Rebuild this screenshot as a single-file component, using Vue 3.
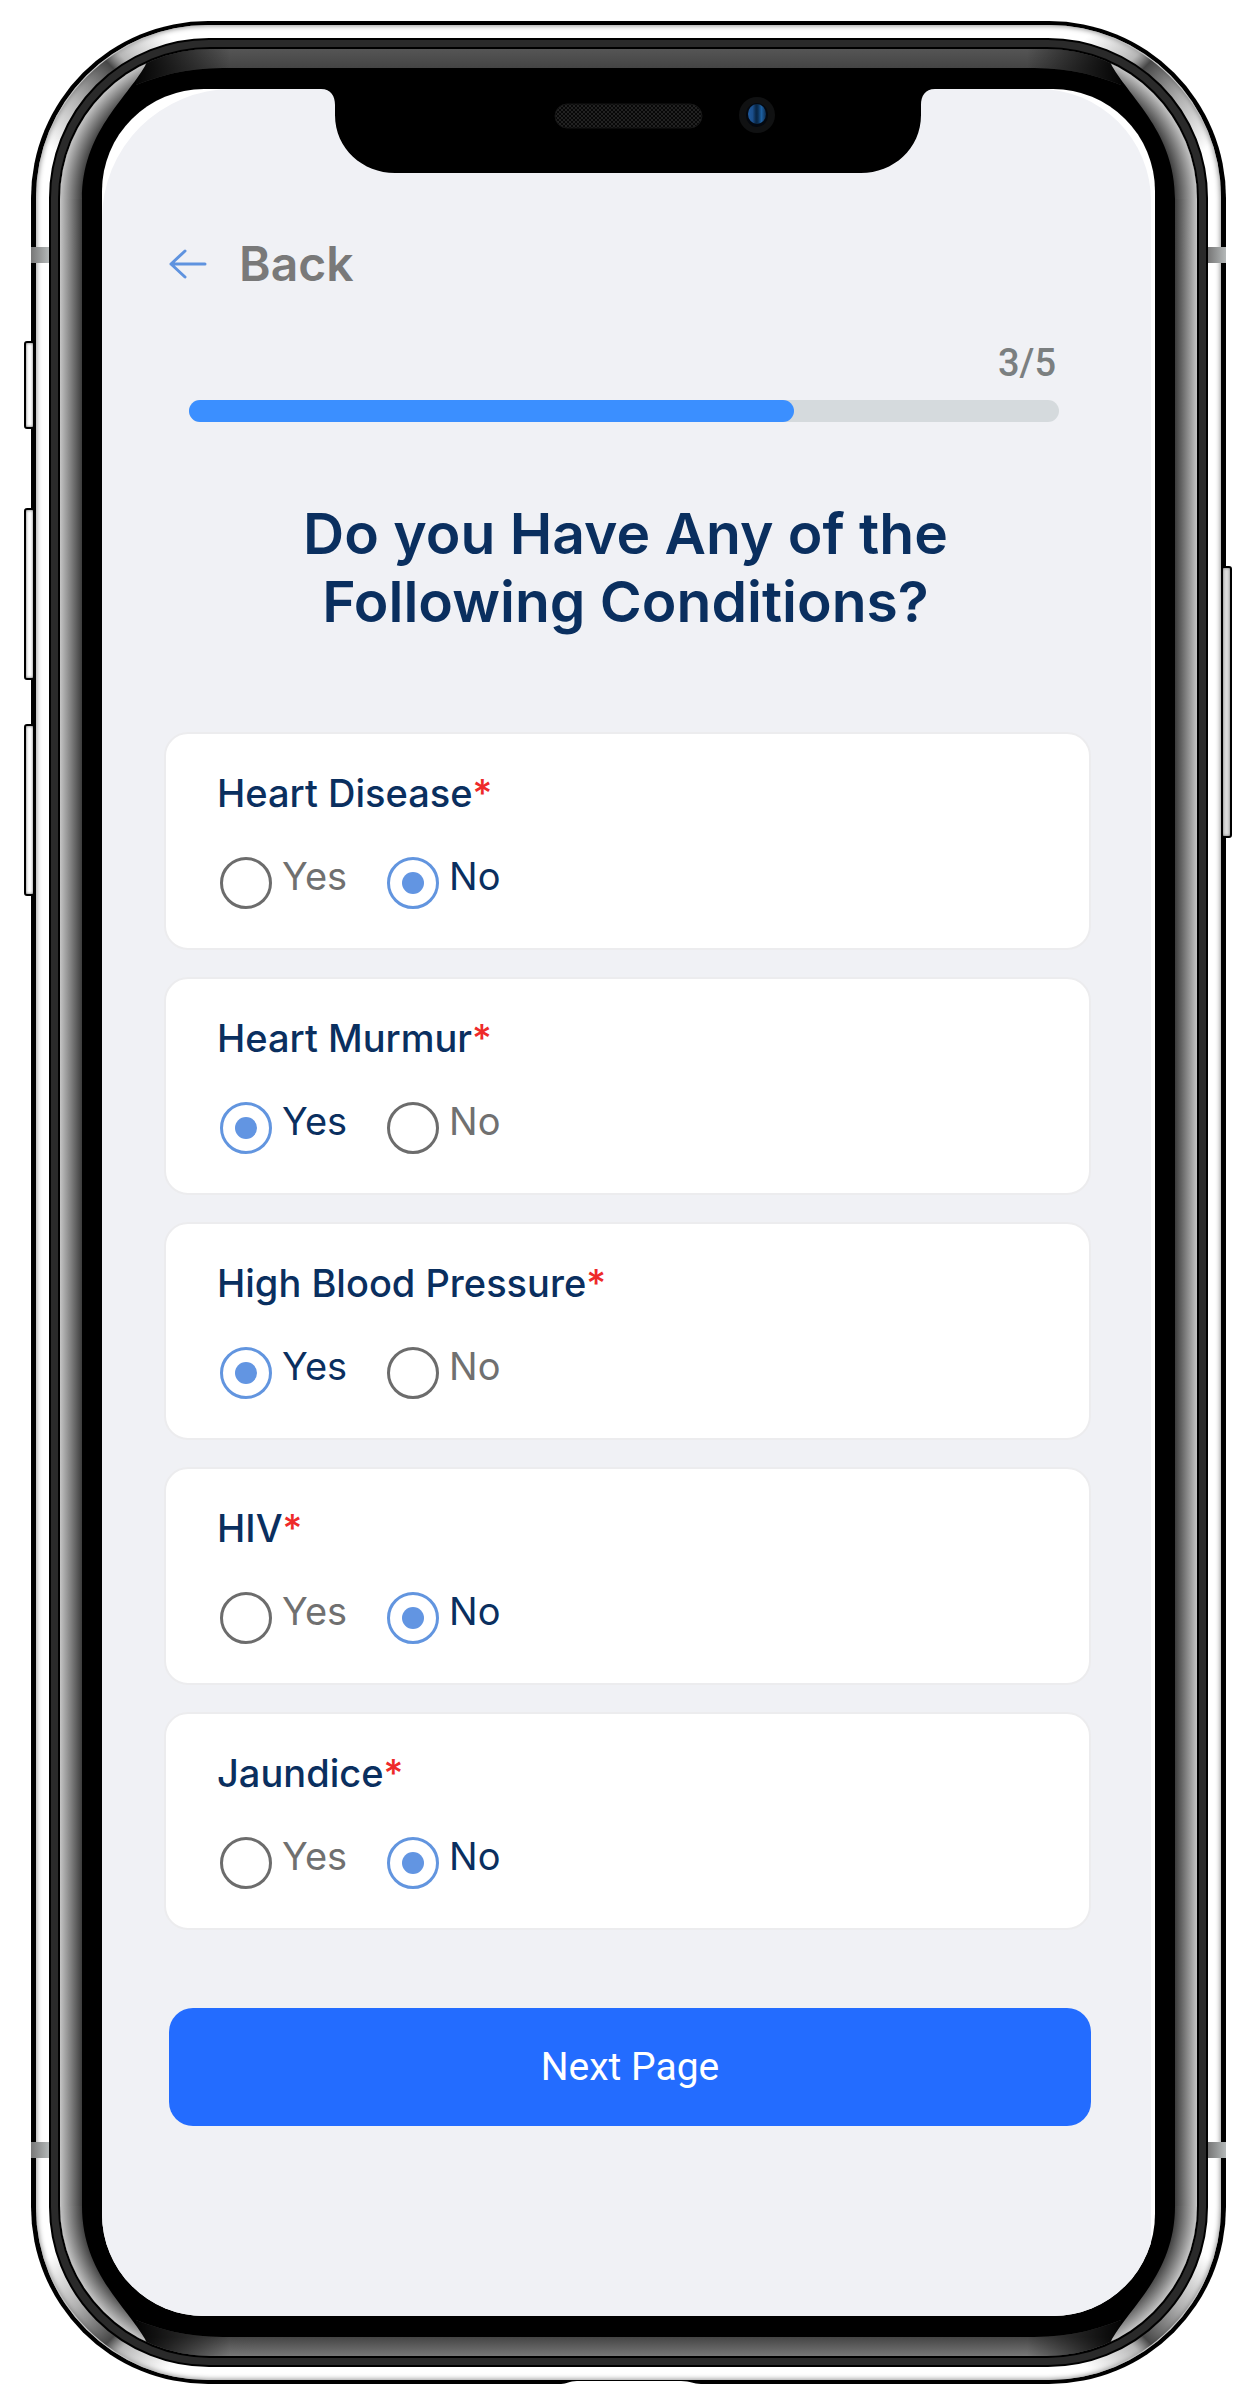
<script setup>
import { ref } from 'vue'

const step = ref(3)
const total = 5
const filled = 69.5

const conditions = ref([
  { id: 'heart-disease', label: 'Heart Disease', answer: 'No' },
  { id: 'heart-murmur', label: 'Heart Murmur', answer: 'Yes' },
  { id: 'blood-pressure', label: 'High Blood Pressure', answer: 'Yes' },
  { id: 'hiv', label: 'HIV', answer: 'No' },
  { id: 'jaundice', label: 'Jaundice', answer: 'No' },
])
const choices = ['Yes', 'No']
const corners = ['tl', 'tr', 'bl', 'br']
</script>

<template>
  <div class="stage">
    <div class="device">
      <span class="key mute"></span>
      <span class="key volume-up"></span>
      <span class="key volume-down"></span>
      <span class="key power"></span>

      <div class="steel">
        <svg v-for="c in corners" :key="c" class="glint" :class="c" viewBox="0 0 180 180" aria-hidden="true">
          <defs>
            <linearGradient :id="'steel-' + c" x1="0" y1="1" x2="1" y2="0">
              <stop offset="0.18" stop-color="#555" stop-opacity="0" />
              <stop offset="0.4" stop-color="#555" stop-opacity="0.45" />
              <stop offset="0.6" stop-color="#333" stop-opacity="0.9" />
              <stop offset="0.66" stop-color="#888" stop-opacity="0.6" />
              <stop offset="0.86" stop-color="#999" stop-opacity="0" />
            </linearGradient>
          </defs>
          <path d="M6 176A170 170 0 0 1 176 6" fill="none" :stroke="'url(#steel-' + c + ')'" stroke-width="13" />
        </svg>
        <div class="gasket">
          <div class="glass">
            <svg v-for="c in corners" :key="c" class="shine" :class="c" viewBox="0 0 170 170" aria-hidden="true">
              <defs>
                <radialGradient :id="'side-' + c" gradientUnits="userSpaceOnUse" cx="150" cy="150" r="150">
                  <stop offset="0.78" stop-color="#1c1c1c" />
                  <stop offset="0.85" stop-color="#3c3c3c" />
                  <stop offset="1" stop-color="#c4c4c4" />
                </radialGradient>
                <linearGradient :id="'flat-' + c" gradientUnits="userSpaceOnUse" x1="0" y1="0" x2="22" y2="0">
                  <stop offset="0" stop-color="#c4c4c4" />
                  <stop offset="1" stop-color="#3c3c3c" />
                </linearGradient>
                <linearGradient :id="'roof-' + c" gradientUnits="userSpaceOnUse" x1="0" y1="0" x2="0" y2="19">
                  <stop offset="0" :stop-color="c[0] === 't' ? '#555' : '#777'" />
                  <stop offset="1" stop-color="#444" />
                </linearGradient>
                <linearGradient :id="'fade-' + c" gradientUnits="userSpaceOnUse" x1="76" y1="0" x2="170" y2="0">
                  <stop offset="0" stop-color="#000" stop-opacity="0.95" />
                  <stop offset="1" stop-color="#000" stop-opacity="0" />
                </linearGradient>
              </defs>
              <path d="M0 0H170V170H0Z" fill="#000" />
              <path d="M76 0H170V19C130 19 108 24 76 36Z" :fill="'url(#roof-' + c + ')'" />
              <path d="M76 0H170V19C130 19 108 24 76 36Z" :fill="'url(#fade-' + c + ')'" />
              <path d="M0 150H22V170H0Z" :fill="'url(#flat-' + c + ')'" />
              <path d="M0 150V0H92L85 17C66 50 22 84 22 150Z" :fill="'url(#side-' + c + ')'" />
            </svg>

            <main class="screen">
              <div class="content">
                <svg class="notch" viewBox="0 0 614 84" aria-hidden="true">
                  <defs>
                    <pattern id="mesh" width="4" height="4" patternUnits="userSpaceOnUse">
                      <rect width="4" height="4" fill="#080808" />
                      <rect width="2" height="2" fill="#222" />
                      <rect x="2" y="2" width="2" height="2" fill="#222" />
                    </pattern>
                    <linearGradient id="lens" x1="0" x2="1">
                      <stop offset="0" stop-color="#1f5a9d" />
                      <stop offset="0.25" stop-color="#1b4f8c" />
                      <stop offset="0.45" stop-color="#082645" />
                      <stop offset="0.55" stop-color="#0a2c50" />
                      <stop offset="0.75" stop-color="#1d5f9f" />
                      <stop offset="1" stop-color="#0a2a4e" />
                    </linearGradient>
                  </defs>
                  <path d="M0 0C10 0 14 7 14 16V26C14 60 42 84 74 84H540C572 84 600 60 600 26V16C600 7 604 0 614 0Z" fill="#000" />
                  <rect x="234" y="15" width="147" height="24" rx="12" fill="url(#mesh)" stroke="#151515" />
                  <ellipse cx="436" cy="26" rx="18" ry="18" fill="#101112" />
                  <ellipse cx="436" cy="26" rx="11" ry="12" fill="#04080f" />
                  <ellipse cx="436" cy="25" rx="9" ry="10" fill="url(#lens)" />
                </svg>

                <header class="topbar">
                  <a class="back" href="#back">
                    <svg class="arrow" viewBox="0 0 38 30" aria-hidden="true">
                      <path d="M2 15H36M16 2L2 15L16 28" fill="none" stroke="#5f93df" stroke-width="3" stroke-linecap="round" stroke-linejoin="round" />
                    </svg>
                    <span>Back</span>
                  </a>
                </header>

                <section class="progress">
                  <span class="count">{{ step }}/{{ total }}</span>
                  <div class="track" role="progressbar" aria-label="Progress" :aria-valuenow="step" :aria-valuemax="total">
                    <div class="fill" :style="{ width: filled + '%' }"></div>
                  </div>
                </section>

                <h1 class="title">Do you Have Any of the<br />Following Conditions?</h1>

                <form class="form" @submit.prevent>
                  <div v-for="item in conditions" :key="item.id" class="card" role="radiogroup" :aria-labelledby="item.id">
                    <div :id="item.id" class="label">{{ item.label }}<span class="required">*</span></div>
                    <div class="options">
                      <label v-for="choice in choices" :key="choice" class="option" :class="{ chosen: item.answer === choice }">
                        <input v-model="item.answer" class="radio" type="radio" :name="item.id" :value="choice" />
                        <span>{{ choice }}</span>
                      </label>
                    </div>
                  </div>
                  <button class="next" type="submit">Next Page</button>
                </form>
              </div>
            </main>
          </div>
        </div>
      </div>

      <span class="antenna left upper"></span>
      <span class="antenna right upper"></span>
      <span class="antenna left lower"></span>
      <span class="antenna right lower"></span>
      <svg class="lip" viewBox="0 0 140 4" aria-hidden="true">
        <path d="M0 4C6 4 8 1 16 1H120C130 1 132 4 140 4Z" fill="#fff" />
      </svg>
    </div>
  </div>
</template>

<style>
body {
  background: #fff;
}
</style>

<style scoped>
.stage {
  padding: 21px 31px 22px;
  font-family: Inter, "Liberation Sans", sans-serif;
}

.stage *,
.stage *::before {
  box-sizing: border-box;
}

.device {
  position: relative;
  padding: 4px 5px;
  border-radius: 177px;
  background: #000;
}

.steel {
  position: relative;
  padding: 13px;
  border-radius: 172px;
  background: #fff;
  box-shadow: inset 0 0 5px 1px #999;
}

.glint,
.shine {
  position: absolute;
}

.glint {
  width: 180px;
  height: 180px;
}

.shine {
  width: 170px;
  height: 170px;
}

.tl {
  top: 0;
  left: 0;
}

.tr {
  top: 0;
  right: 0;
  transform: scaleX(-1);
}

.bl {
  bottom: 0;
  left: 0;
  transform: scaleY(-1);
}

.br {
  right: 0;
  bottom: 0;
  transform: scale(-1);
}

.gasket {
  position: relative;
  padding: 9px;
  border: 2px solid #000;
  border-radius: 160px;
  background: #2a2a2a;
}

.glass {
  position: relative;
  padding: 40px 42px;
  overflow: hidden;
  border-radius: 150px;
  background:
    linear-gradient(#555, #444) top / 100% 19px no-repeat,
    linear-gradient(#444, #777) bottom / 100% 19px no-repeat,
    linear-gradient(90deg, #c4c4c4, #3c3c3c) left / 22px 100% no-repeat,
    linear-gradient(270deg, #c4c4c4, #3c3c3c) right / 22px 100% no-repeat,
    #000;
  box-shadow: 0 0 0 2px #000;
}

.screen {
  position: relative;
  padding-right: 4px;
  overflow: hidden;
  border-radius: 102px;
  background: #fff;
}

.content {
  display: flex;
  flex-direction: column;
  padding: 0 60px 190px 62px;
  border-radius: 130px 112px 0 0;
  background: #f0f1f5;
}

.notch {
  align-self: center;
  width: 614px;
  height: 84px;
}

.topbar {
  display: flex;
  padding: 62px 5px 47px;
}

.back {
  display: flex;
  align-items: center;
  gap: 32px;
  color: #797979;
  font-size: 48px;
  font-weight: 600;
  line-height: 58px;
  text-decoration: none;
}

.arrow {
  width: 38px;
  height: 30px;
}

.progress {
  display: flex;
  flex-direction: column;
  gap: 14px;
  padding: 0 32px 78px 25px;
}

.count {
  align-self: flex-end;
  padding-right: 3px;
  color: #7b7f80;
  font-family: Roboto, sans-serif;
  font-size: 38px;
  font-weight: 500;
  line-height: 46px;
}

.track {
  height: 22px;
  border-radius: 11px;
  background: #d5dadd;
}

.fill {
  height: 100%;
  border-radius: 11px;
  background: #3b8fff;
}

.title {
  margin: 0 0 96px;
  padding-right: 4px;
  color: #0a2f5f;
  font-size: 57px;
  font-weight: 600;
  line-height: 68px;
  text-align: center;
}

.form {
  display: flex;
  flex-direction: column;
  gap: 27px;
}

.card {
  padding: 36px 51px 39px;
  border: 2px solid #ececee;
  border-radius: 24px;
  background: #fff;
}

.label {
  margin-bottom: 37px;
  color: #0a2f5f;
  font-size: 38px;
  font-weight: 500;
  line-height: 46px;
}

.required {
  color: #ee2a2a;
}

.options {
  display: flex;
  gap: 40px;
  padding: 0 3px;
}

.option {
  display: flex;
  gap: 10px;
  color: #707070;
  font-size: 38px;
  line-height: 46px;
}

.chosen {
  color: #0a2f5f;
}

.radio {
  display: grid;
  place-content: center;
  width: 52px;
  height: 52px;
  margin: 4px 0 0;
  border: 3px solid #6c6c6c;
  border-radius: 50%;
  background: #fff;
  appearance: none;
}

.radio:checked {
  border-color: #6295df;
}

.radio:checked::before {
  width: 22px;
  height: 22px;
  border-radius: 50%;
  background: #6295e2;
  content: "";
}

.next {
  height: 118px;
  margin: 51px 0 0 5px;
  border: 0;
  border-radius: 24px;
  background: #236cff;
  color: #fff;
  font-family: Roboto, sans-serif;
  font-size: 39px;
}

.key {
  position: absolute;
  left: -7px;
  width: 11px;
  border: 2px solid #000;
  border-radius: 3px;
  background: #fff;
  box-shadow: inset 0 0 3px #666;
}

.mute {
  top: 320px;
  height: 88px;
}

.volume-up {
  top: 487px;
  height: 172px;
}

.volume-down {
  top: 703px;
  height: 172px;
}

.power {
  top: 545px;
  right: -6px;
  left: auto;
  height: 272px;
  background: #ddd;
}

.antenna {
  position: absolute;
  width: 18px;
  height: 16px;
  background: linear-gradient(90deg, #777, #b4b8b8);
}

.left {
  left: 0;
}

.right {
  right: 0;
}

.upper {
  top: 226px;
}

.lower {
  bottom: 226px;
}

.lip {
  position: absolute;
  bottom: 0;
  left: calc(50% - 68px);
  width: 140px;
  height: 4px;
}
</style>
